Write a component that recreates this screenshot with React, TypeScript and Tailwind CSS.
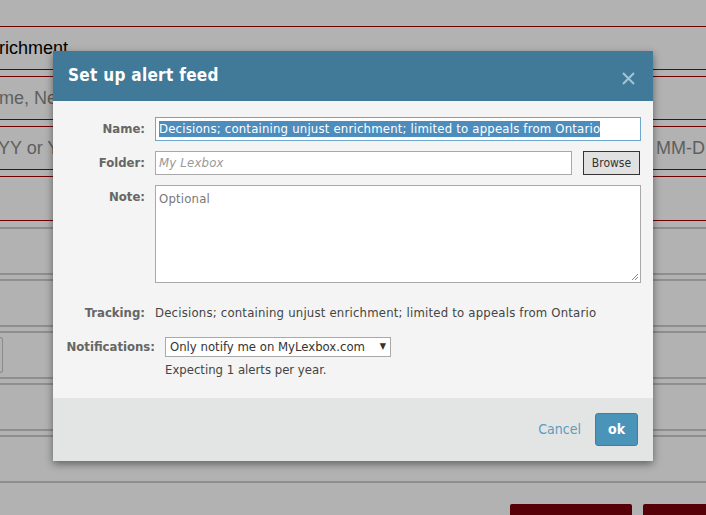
import React from "react";

const dlgFont = { fontFamily: '"DejaVu Sans Condensed", "DejaVu Sans", Tahoma, sans-serif' };

function RedBox({ children }: { children?: React.ReactNode }) {
  return (
    <div className="h-[44px] border-y border-[#6e0000] flex items-center justify-between overflow-hidden">
      {children}
    </div>
  );
}

function GrayBox({ children }: { children?: React.ReactNode }) {
  return (
    <div className="h-[48px] border-t-2 border-b-2 border-[#8e8e8e] flex items-center">{children}</div>
  );
}

export default function App() {
  return (
    <div
      className="relative w-[706px] h-[515px] overflow-hidden bg-[#b2b2b2]"
      style={{ fontFamily: '"Liberation Sans", Arial, sans-serif' }}
    >
      {/* background page */}
      <div className="flex flex-col pt-[26px] gap-[6px]">
        <RedBox>
          <span className="text-[18px] text-black -ml-[1px]">richment</span>
        </RedBox>
        <RedBox>
          <span className="text-[18px] text-[#5f5f5f] -ml-[1px]">me, Ne</span>
        </RedBox>
        <RedBox>
          <span className="text-[18px] text-[#5f5f5f] -ml-[2px]">YY or Y</span>
          <span className="text-[18px] text-[#5f5f5f] whitespace-nowrap -mr-[12px]">MM-DD</span>
        </RedBox>
        <div className="h-[45px] border-y border-[#6e0000]" />
        <div className="flex flex-col gap-[4px]">
          <GrayBox />
          <GrayBox />
          <GrayBox>
            <div className="h-[36px] w-[4px] -ml-[1px] border border-l-0 border-[#8a8a8a] rounded-r-[3px]" />
          </GrayBox>
          <GrayBox />
          <GrayBox />
        </div>
        <div className="flex justify-end gap-[11px] mt-[15px]">
          <div className="w-[122px] h-[20px] bg-[#560008] rounded-t-[2px]" />
          <div className="w-[63px] h-[20px] bg-[#560008] rounded-tl-[2px]" />
        </div>
      </div>

      {/* dialog */}
      <div
        className="absolute left-[53px] top-[51px] w-[600px] flex flex-col shadow-[0_3px_8px_rgba(0,0,0,0.45)]"
        style={dlgFont}
      >
        <div className="h-[50px] bg-[#417a99] flex items-center justify-between pl-[15px] pr-[18px]">
          <span className="text-white text-[17px] font-bold tracking-[0.3px]">Set up alert feed</span>
          <svg width="13" height="13" viewBox="0 0 13 13" className="mt-[4px]">
            <path d="M1 1 L12 12 M12 1 L1 12" stroke="#a7c3d3" strokeWidth="2" />
          </svg>
        </div>
        <div className="bg-[#f3f4f3] h-[297px] flex flex-col pt-[16px] text-[13px] text-[#444] tracking-[0.2px]">
          {/* Name */}
          <div className="flex items-center">
            <div className="w-[92px] text-right font-bold text-[#666] tracking-normal">Name:</div>
            <div className="ml-[10px] w-[486px] h-[24px] bg-white border border-[#6ea7cd] flex items-center pl-[3px] overflow-hidden">
              <span className="bg-[#4d8dbe] text-white whitespace-nowrap leading-[16px]">
                Decisions; containing unjust enrichment; limited to appeals from Ontario
              </span>
            </div>
          </div>
          {/* Folder */}
          <div className="flex items-center mt-[10px]">
            <div className="w-[92px] text-right font-bold text-[#666] tracking-normal">Folder:</div>
            <div className="ml-[10px] w-[417px] h-[24px] bg-white border border-[#a9a9a9] flex items-center pl-[3px]">
              <span className="italic text-[#999]">My Lexbox</span>
            </div>
            <div className="ml-[11px] w-[57px] h-[24px] bg-[#e1e1e1] border border-[#333] flex items-center justify-center text-[#333] text-[12px] tracking-normal">
              Browse
            </div>
          </div>
          {/* Note */}
          <div className="flex items-start mt-[10px]">
            <div className="w-[92px] text-right font-bold text-[#666] mt-[2px] tracking-normal">Note:</div>
            <div className="relative ml-[10px] w-[486px] h-[98px] bg-white border border-[#a9a9a9] pl-[3px] pt-[3px]">
              <span className="text-[#777]">Optional</span>
              <svg width="8" height="8" viewBox="0 0 8 8" className="absolute right-[1px] bottom-[1px]">
                <path d="M7 1 L1 7 M7 4 L4 7" stroke="#888" strokeWidth="1" />
              </svg>
            </div>
          </div>
          {/* Tracking */}
          <div className="flex items-center mt-[20px]">
            <div className="w-[92px] text-right font-bold text-[#666] tracking-normal">Tracking:</div>
            <div className="ml-[10px] text-[#444] whitespace-nowrap">
              Decisions; containing unjust enrichment; limited to appeals from Ontario
            </div>
          </div>
          {/* Notifications */}
          <div className="flex items-center mt-[14px]">
            <div className="w-[102px] text-right font-bold text-[#666] tracking-normal">Notifications:</div>
            <div className="ml-[10px] w-[226px] h-[20px] bg-white border border-[#a9a9a9] flex items-center justify-between pl-[4px] pr-[4px] text-[#333] tracking-normal">
              <span>Only notify me on MyLexbox.com</span>
              <span className="text-[9px]">▼</span>
            </div>
          </div>
          <div className="ml-[112px] mt-[3px] text-[#444] tracking-normal">Expecting 1 alerts per year.</div>
        </div>
        <div className="bg-[#e3e5e4] h-[63px] flex items-center justify-end pr-[15px] gap-[14px]">
          <span className="text-[#5b9bc0] text-[14px]">Cancel</span>
          <div className="w-[43px] h-[33px] bg-[#4a94b9] border border-[#3f7fa0] rounded-[3px] flex items-center justify-center text-white font-bold text-[14px]">
            ok
          </div>
        </div>
      </div>
    </div>
  );
}
